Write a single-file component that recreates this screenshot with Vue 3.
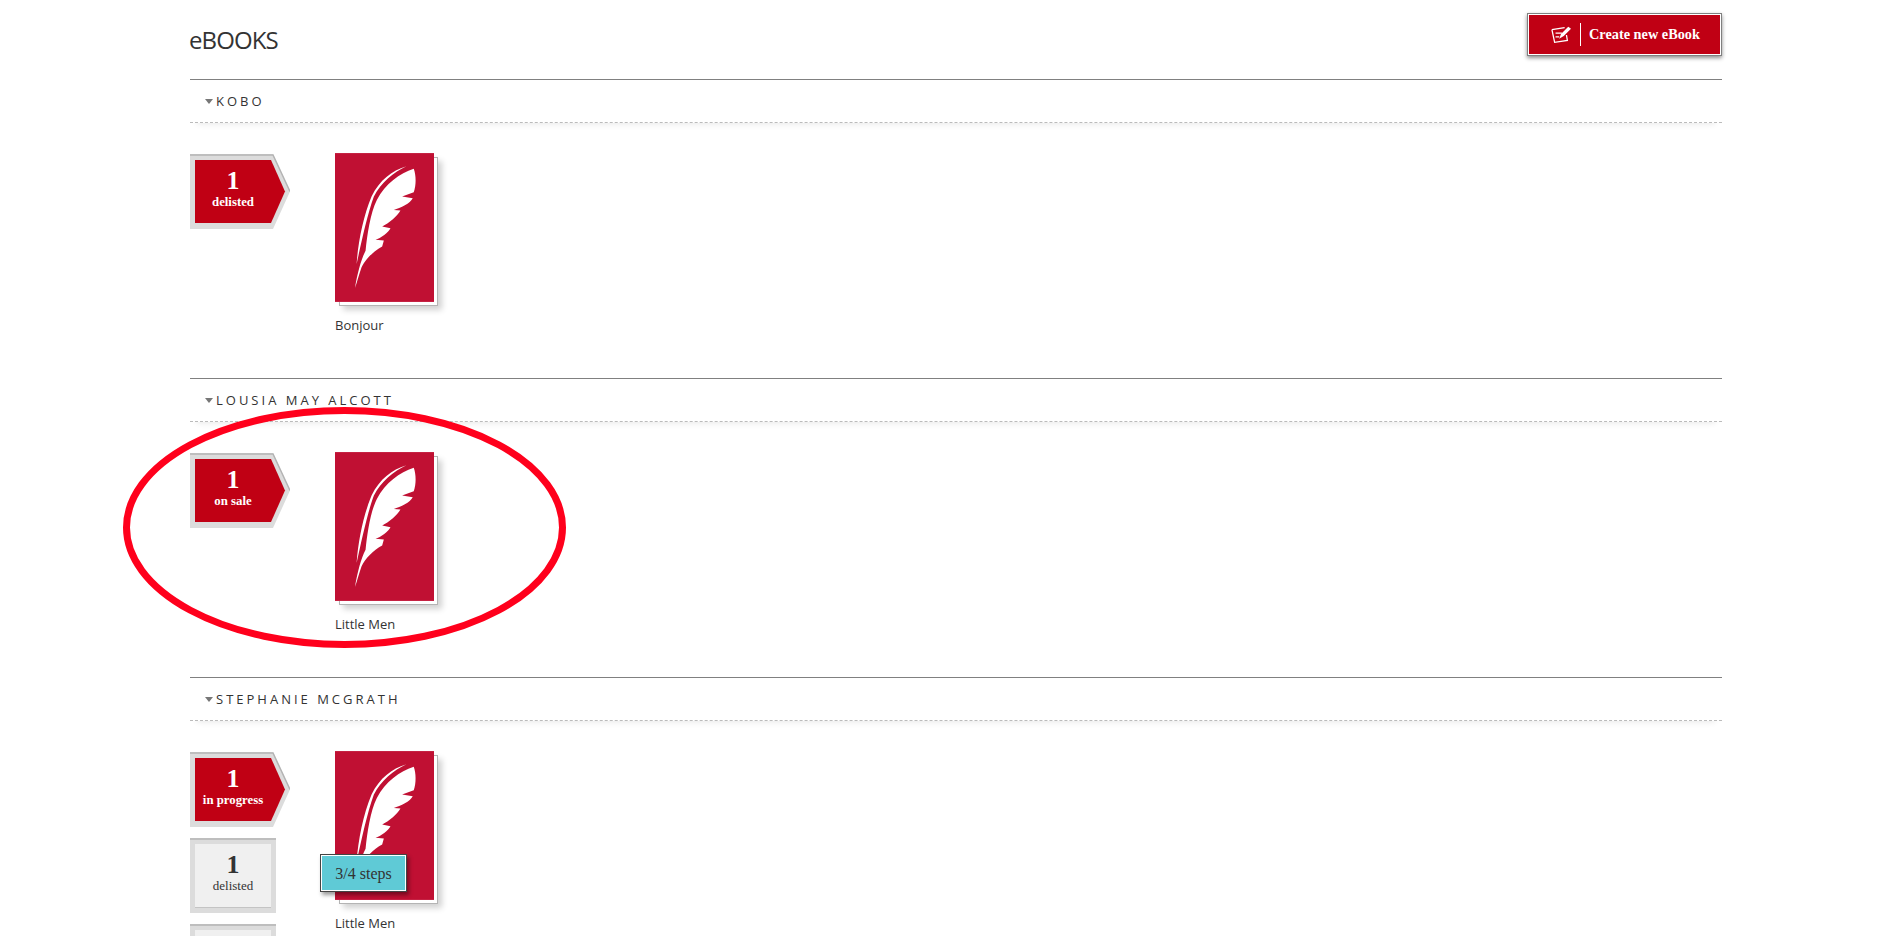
<template>
  <div class="page">
    <header class="top">
      <h1 class="title">eBOOKS</h1>
      <button class="create-btn">
        <svg class="create-icon" viewBox="0 0 24 22" width="22" height="20">
          <path d="M2 5 L16 3 M2 5 L5 19 L19 17 L18 11" fill="none" stroke="#fff" stroke-width="1.4" />
          <path d="M6 9 H13 M6 13 H10" fill="none" stroke="#fff" stroke-width="1.4" />
          <path d="M10 15 L12 10 L20 2 L23 4 L15 12 Z" fill="#fff" />
        </svg>
        <span class="create-sep"></span>
        <span>Create new eBook</span>
      </button>
    </header>

    <section v-for="author in authors" :key="author.name" class="author">
      <div class="author-head">
        <span class="caret"></span>
        <span class="author-name">{{ author.name }}</span>
      </div>
      <div class="author-body">
        <div class="badges">
          <div v-for="(b, i) in author.badges" :key="i" class="badge" :class="{ active: b.active }">
            <svg v-if="b.active" class="badge-bg" width="100" height="75" viewBox="0 0 100 75">
              <path d="M0 0 H83 L100 37.5 L83 75 H0 Z" fill="#dcdcdc" />
              <path d="M0 1 H83 L100 37.5" fill="none" stroke="#b4b4b4" stroke-width="1.5" />
              <path d="M5 6 H81 L95 37.5 L81 69 H5 Z" fill="#c00014" />
            </svg>
            <svg v-else class="badge-bg" width="86" height="75" viewBox="0 0 86 75">
              <rect width="86" height="75" fill="#dcdcdc" />
              <path d="M0 1 H86" stroke="#b4b4b4" stroke-width="1.5" />
              <rect x="5" y="6" width="76" height="64" fill="#f0f0f0" />
              <path d="M5 69.5 H81" stroke="#c4c4c4" />
            </svg>
            <div v-if="b.count" class="badge-text">
              <strong class="badge-count">{{ b.count }}</strong>
              <span class="badge-label">{{ b.label }}</span>
            </div>
          </div>
        </div>
        <div class="book">
          <div class="cover">
            <svg viewBox="30 24 298 448" width="99" height="149">
              <rect x="30" y="24" width="298" height="448" fill="#c01033" />
              <g fill="#fff" filter="url(#soft)">
                <path d="M90 430 C98 385 108 345 122 318 C127 270 136 205 156 165 C182 115 225 85 267 71 C274 90 275 120 267 142 L232 155 L264 160 C257 175 227 190 207 195 L227 197 C217 215 192 235 172 245 L197 250 C192 262 167 280 152 285 L177 287 L172 305 C147 318 120 345 110 368 C102 390 97 412 90 430 Z" />
                <path d="M95 358 C100 290 115 215 140 155 C165 105 200 78 245 64 C206 82 170 112 147 155 C127 210 110 290 95 358 Z" />
              </g>
              <defs>
                <filter id="soft"><feGaussianBlur stdDeviation="1.8" /></filter>
              </defs>
            </svg>
          </div>
          <div v-if="author.steps" class="steps">{{ author.steps }}</div>
          <div class="book-title">{{ author.book }}</div>
        </div>
      </div>
    </section>

    <svg class="annotation" width="452" height="250" viewBox="0 0 452 250">
      <ellipse cx="222.5" cy="122.5" rx="218" ry="117" fill="none" stroke="#ff001c" stroke-width="7" />
    </svg>
  </div>
</template>

<script setup>
const authors = [
  {
    name: 'KOBO',
    book: 'Bonjour',
    badges: [{ count: 1, label: 'delisted', active: true }],
  },
  {
    name: 'LOUSIA MAY ALCOTT',
    book: 'Little Men',
    badges: [{ count: 1, label: 'on sale', active: true }],
  },
  {
    name: 'STEPHANIE MCGRATH',
    book: 'Little Men',
    steps: '3/4 steps',
    badges: [
      { count: 1, label: 'in progress', active: true },
      { count: 1, label: 'delisted', active: false },
      { active: false },
    ],
  },
]
</script>

<style>
html,
body {
  height: 936px;
  overflow: hidden;
  background: #fff;
}
</style>

<style scoped>
.page {
  position: relative;
  width: 1532px;
  margin-left: 190px;
  font-family: "Open Sans", "Liberation Sans", sans-serif;
  color: #333;
}
.top {
  height: 79px;
  display: flex;
  align-items: flex-start;
  justify-content: space-between;
}
.title {
  margin: 25px 0 0 -1px;
  font-size: 24px;
  line-height: 30px;
  font-weight: 500;
  letter-spacing: -0.9px;
  color: #333;
}
.create-btn {
  margin-top: 13px;
  width: 195px;
  height: 43px;
  padding: 0 0 0 22px;
  display: flex;
  align-items: center;
  background: #c00014;
  border: 1px solid #808080;
  outline: 1px solid #fff;
  outline-offset: -2px;
  box-shadow: 0 2px 4px rgba(0, 0, 0, 0.45);
  color: #fff;
  font-family: "Liberation Serif", serif;
  font-size: 14.3px;
  font-weight: 700;
}
.create-icon {
  flex: none;
}
.create-sep {
  width: 1px;
  height: 23px;
  margin: 0 8px 0 8px;
  background: #fff;
}
.author {
  height: 299px;
  box-sizing: border-box;
  border-top: 1px solid #808080;
}
.author-head {
  height: 43px;
  display: flex;
  align-items: center;
  gap: 3px;
  padding: 0 0 1px 15px;
  box-sizing: border-box;
  border-bottom: 1px dashed #bbb;
  box-shadow: 0 7px 7px -7px rgba(0, 0, 0, 0.12);
}
.caret {
  width: 0;
  height: 0;
  margin-top: 2px;
  border-left: 4px solid transparent;
  border-right: 4px solid transparent;
  border-top: 5px solid #777;
}
.author-name {
  font-size: 13px;
  letter-spacing: 3px;
  color: #333;
}
.author-body {
  display: flex;
  padding-top: 31px;
}
.badges {
  width: 145px;
  flex: none;
  display: flex;
  flex-direction: column;
  gap: 11px;
}
.badge {
  display: grid;
  width: 100px;
  height: 75px;
}
.badge-bg,
.badge-text {
  grid-area: 1 / 1;
}
.badge-text {
  width: 86px;
  display: flex;
  flex-direction: column;
  align-items: center;
  padding-top: 14px;
  box-sizing: border-box;
  font-family: "Liberation Serif", serif;
  color: #333;
}
.active .badge-text {
  color: #fff;
}
.badge-count {
  font-size: 26px;
  line-height: 26px;
}
.badge-label {
  font-size: 13px;
  line-height: 16px;
}
.active .badge-label {
  font-size: 12.8px;
  font-weight: 700;
}
.book {
  position: relative;
  width: 99px;
}
.cover {
  height: 149px;
  margin-top: -1px;
  box-shadow: 4px 4px 0 -1px #fff, 4px 4px 0 0 #b4b4b4, 8px 8px 6px rgba(0, 0, 0, 0.18);
}
.cover svg {
  display: block;
}
.steps {
  position: absolute;
  top: 102px;
  left: -15px;
  width: 87px;
  height: 38px;
  padding-top: 2px;
  display: flex;
  align-items: center;
  justify-content: center;
  box-sizing: border-box;
  background: #5fcad6;
  border: 1px solid #444;
  outline: 1px solid #fff;
  outline-offset: -2px;
  box-shadow: 2px 3px 4px rgba(0, 0, 0, 0.4);
  font-family: "Liberation Serif", serif;
  font-size: 16px;
  color: #333;
}
.book-title {
  margin-top: 14px;
  font-size: 13px;
  line-height: 18px;
  white-space: nowrap;
  color: #333;
}
.annotation {
  position: absolute;
  left: -68px;
  top: 405px;
  pointer-events: none;
}
</style>
